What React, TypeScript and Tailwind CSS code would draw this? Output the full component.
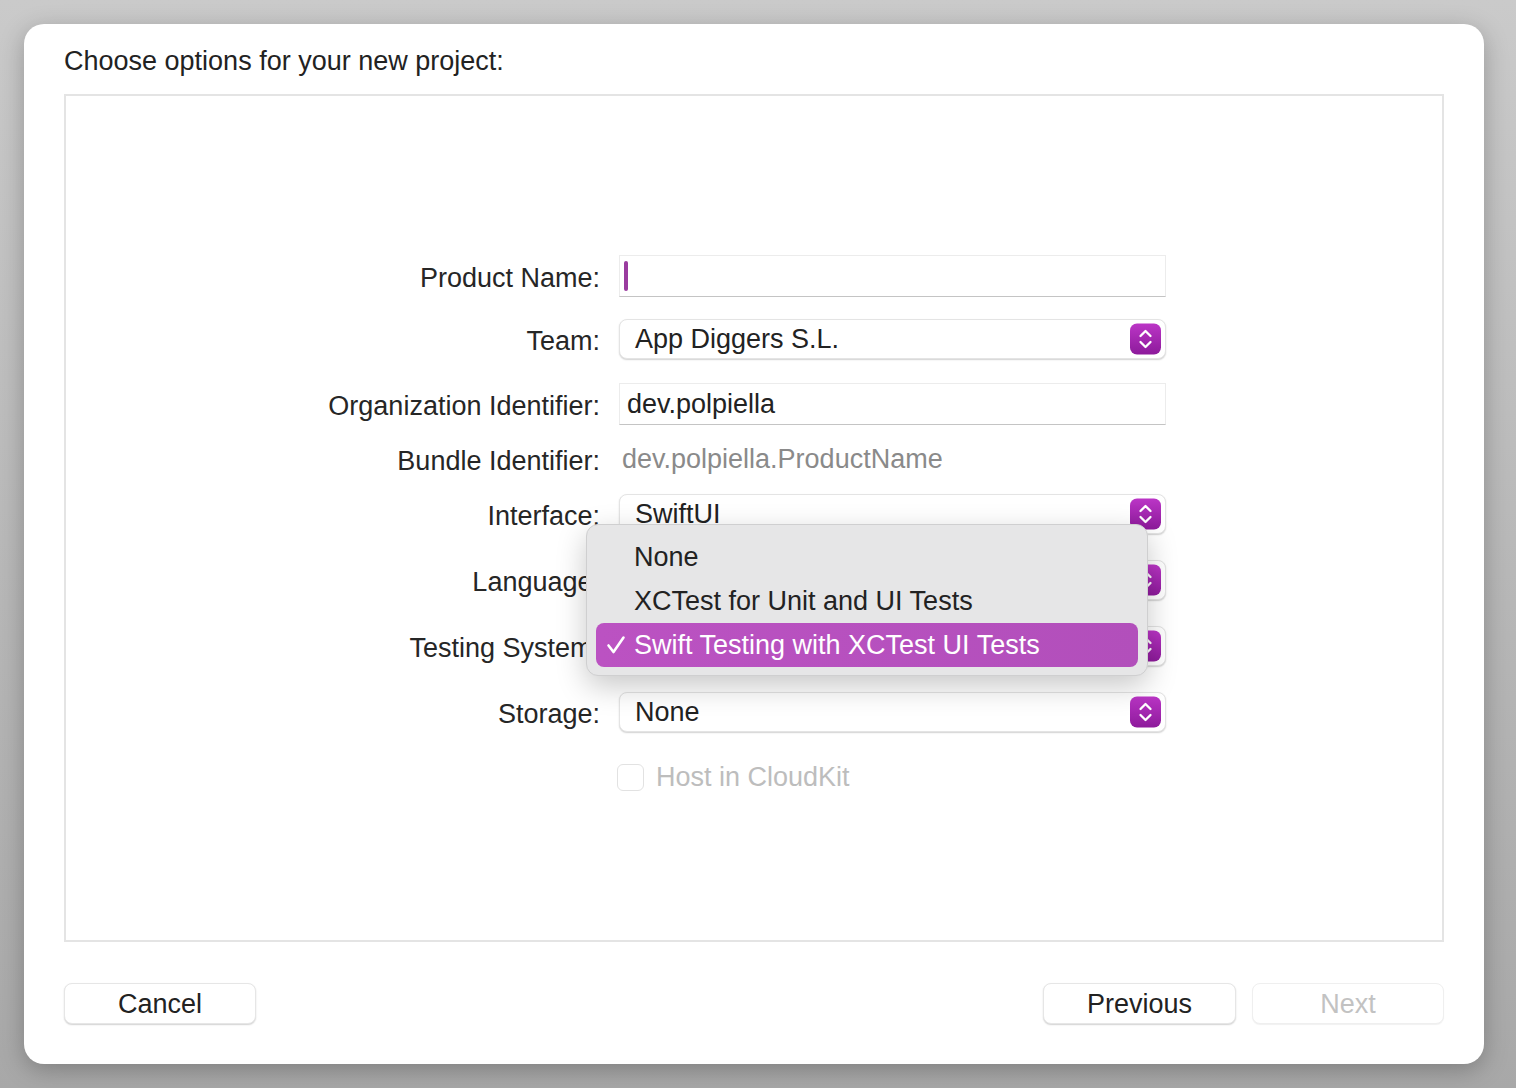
import type { ReactNode } from 'react'

const font = { fontFamily: '"Liberation Sans", Arial, sans-serif' }

const Stepper = () => (
  <span className="absolute right-[4px] top-1/2 -translate-y-1/2 w-[31px] h-[31px] rounded-[7px] bg-gradient-to-b from-[#bb35c6] to-[#8d1a9b] flex items-center justify-center">
    <svg width="31" height="31" viewBox="0 0 31 31" fill="none" stroke="white" strokeWidth="2.3" strokeLinecap="round" strokeLinejoin="round">
      <path d="M10.5 12.5 L15.5 7.5 L20.5 12.5" />
      <path d="M10.5 18.5 L15.5 23.5 L20.5 18.5" />
    </svg>
  </span>
)

const Popup = ({ value }: { value?: string }) => (
  <div className="relative h-[40px] w-[547px] rounded-[8px] bg-white border border-[#e4e4e4] shadow-[0_1px_1.5px_rgba(0,0,0,0.18)] flex items-center pl-[15px] text-[27px] leading-[32px] text-[#222]">
    {value}
    <Stepper />
  </div>
)

const TextField = ({ children }: { children?: ReactNode }) => (
  <div className="h-[42px] w-[547px] bg-white border border-[#ececec] border-b-[#c4c4c4] flex items-center pl-[7px] text-[27px] leading-[32px] text-[#222]">
    {children}
  </div>
)

const Row = ({ label, children, className = '' }: { label: string; children: ReactNode; className?: string }) => (
  <div className={`flex items-center ${className}`}>
    <div className="w-[534px] text-right text-[27px] leading-[32px] text-[#262626] pt-[4px] whitespace-nowrap">{label}</div>
    <div className="ml-[19px]">{children}</div>
  </div>
)

export default function App() {
  return (
    <div className="min-h-[1088px] w-[1516px] bg-gradient-to-b from-[#cacaca] to-[#a8a8a8] pt-[24px] pl-[24px]" style={font}>
      <div className="w-[1460px] h-[1040px] rounded-[20px] bg-white shadow-[0_6px_24px_rgba(0,0,0,0.25)] px-[40px] pt-[21px]">
        <h1 className="text-[27px] leading-[32px] text-[#222]">Choose options for your new project:</h1>

        <div className="relative mt-[17px] h-[848px] w-[1380px] border-2 border-[#e4e4e4] pt-[159px]">
          <Row label="Product Name:">
            <TextField>
              <span className="block w-[4px] h-[30px] rounded-full bg-[#9a3c9f] -ml-[3px]" />
            </TextField>
          </Row>
          <Row label="Team:" className="mt-[22px]">
            <Popup value="App Diggers S.L." />
          </Row>
          <Row label="Organization Identifier:" className="mt-[24px]">
            <TextField>dev.polpiella</TextField>
          </Row>
          <Row label="Bundle Identifier:" className="mt-[14px] h-[40px]">
            <span className="pl-[3px] text-[27px] leading-[32px] text-[#8a8a8a]">dev.polpiella.ProductName</span>
          </Row>
          <Row label="Interface:" className="mt-[15px]">
            <Popup value="SwiftUI" />
          </Row>
          <Row label="Language:" className="mt-[26px]">
            <Popup />
          </Row>
          <Row label="Testing System:" className="mt-[26px]">
            <Popup />
          </Row>
          <Row label="Storage:" className="mt-[26px]">
            <Popup value="None" />
          </Row>

          <div className="mt-[29px] ml-[551px] flex items-center gap-[12px]">
            <span className="w-[27px] h-[27px] rounded-[6px] border border-[#e2e2e2] bg-white" />
            <span className="text-[27px] leading-[32px] text-[#bdbdbd]">Host in CloudKit</span>
          </div>

          <div className="absolute left-[520px] top-[428px] w-[562px] h-[152px] rounded-[12px] bg-[#e6e6e7] border border-[#cfcfd0] shadow-[0_10px_30px_rgba(0,0,0,0.22)] px-[9px] pt-[10px]">
            <div className="h-[44px] flex items-center pl-[38px] text-[27px] text-[#222]">None</div>
            <div className="h-[44px] flex items-center pl-[38px] text-[27px] text-[#222]">XCTest for Unit and UI Tests</div>
            <div className="h-[44px] flex items-center rounded-[8px] bg-gradient-to-r from-[#bb52c2] to-[#b24fbb] text-[27px] text-white">
              <svg className="ml-[10px] mr-[8px]" width="20" height="20" viewBox="0 0 20 20" fill="none" stroke="white" strokeWidth="2.6" strokeLinecap="round" strokeLinejoin="round">
                <path d="M2.5 10.5 L7.5 17 L17.5 2.5" />
              </svg>
              Swift Testing with XCTest UI Tests
            </div>
          </div>
        </div>

        <div className="mt-[41px] flex items-center">
          <button className="w-[192px] h-[41px] rounded-[8px] bg-white border border-[#e6e6e6] shadow-[0_1px_1.5px_rgba(0,0,0,0.18)] text-[27px] text-[#222]">Cancel</button>
          <div className="ml-auto flex gap-[16px]">
            <button className="w-[193px] h-[41px] rounded-[8px] bg-white border border-[#e6e6e6] shadow-[0_1px_1.5px_rgba(0,0,0,0.18)] text-[27px] text-[#222]">Previous</button>
            <button className="w-[192px] h-[41px] rounded-[8px] bg-white border border-[#efefef] shadow-[0_1px_1px_rgba(0,0,0,0.06)] text-[27px] text-[#c2c2c2]">Next</button>
          </div>
        </div>
      </div>
    </div>
  )
}
